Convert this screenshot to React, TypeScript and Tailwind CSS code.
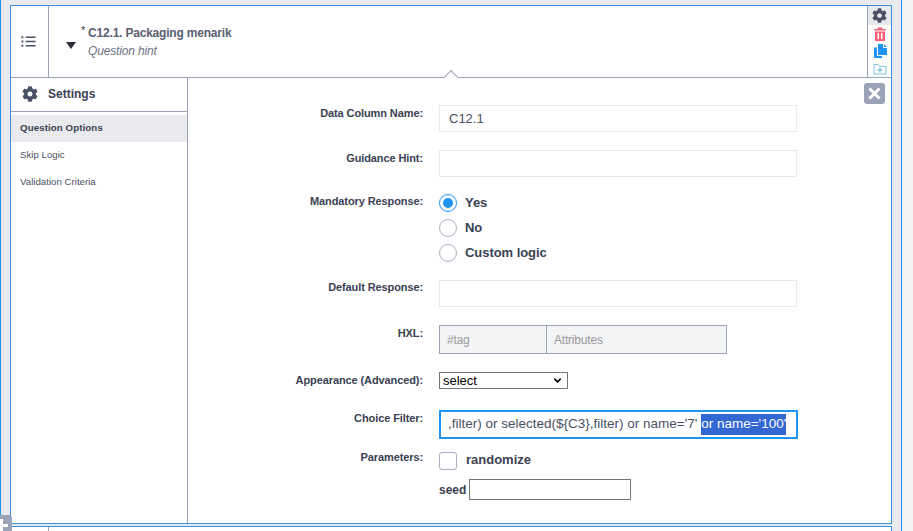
import { ChevronDown } from 'lucide-react'

function Gear({ className }: { className: string }) {
  return (
    <svg className={className} viewBox="0 0 512 512" fill="currentColor">
      <path d="M487.4 315.7l-42.6-24.6c4.3-23.2 4.3-47 0-70.2l42.6-24.6c4.9-2.8 7.1-8.6 5.5-14-11.1-35.6-30-67.8-54.7-94.6-3.8-4.1-10-5.1-14.8-2.3L380.8 110c-17.9-15.4-38.5-27.3-60.8-35.1V25.8c0-5.6-3.9-10.5-9.4-11.7-36.7-8.2-74.3-7.8-109.2 0-5.5 1.2-9.4 6.1-9.4 11.7V75c-22.2 7.9-42.8 19.8-60.8 35.1L88.7 85.5c-4.9-2.8-11-1.9-14.8 2.3-24.7 26.7-43.6 58.9-54.7 94.6-1.7 5.4.6 11.2 5.5 14L67.3 221c-4.3 23.2-4.3 47 0 70.2l-42.6 24.6c-4.9 2.8-7.1 8.6-5.5 14 11.1 35.6 30 67.8 54.7 94.6 3.8 4.1 10 5.1 14.8 2.3l42.6-24.6c17.9 15.4 38.5 27.3 60.8 35.1v49.2c0 5.6 3.9 10.5 9.4 11.7 36.7 8.2 74.3 7.8 109.2 0 5.5-1.2 9.4-6.1 9.4-11.7v-49.2c22.2-7.9 42.8-19.8 60.8-35.1l42.6 24.6c4.9 2.8 11 1.9 14.8-2.3 24.7-26.7 43.6-58.9 54.7-94.6 1.5-5.5-.7-11.3-5.6-14.1zM256 336c-44.1 0-80-35.9-80-80s35.9-80 80-80 80 35.9 80 80-35.9 80-80 80z" />
    </svg>
  )
}

function Label({ children, className = '' }: { children: string; className?: string }) {
  return (
    <div className={`w-[251px] shrink-0 pr-[16px] text-right text-[11px] leading-[14px] font-bold tracking-[-0.1px] text-[#3a4152] ${className}`}>
      {children}
    </div>
  )
}

function Radio({ label, checked = false }: { label: string; checked?: boolean }) {
  return (
    <div className="flex h-[25px] items-center gap-[8px]">
      <span className={`flex size-[18px] items-center justify-center rounded-full border ${checked ? 'border-[#2094f3]' : 'border-[#a9b0c2]'}`}>
        {checked && <span className="size-[10px] rounded-full bg-[#2094f3]" />}
      </span>
      <span className="text-[13px] font-bold tracking-[-0.05px] text-[#3a4152]">{label}</span>
    </div>
  )
}

export default function App() {
  return (
    <div className="relative h-[531px] w-[913px] overflow-hidden bg-[#f3f4f6] font-['Liberation_Sans',Arial,sans-serif]">
      <div className="h-full w-[902px] border-x border-x-[#2094f3] bg-[#e9eaee] pt-[5px] pr-[9px] pl-[9px]">
        <div className="relative h-[519px] w-[882px] border border-[#3b8fdc] bg-white">
          <div className="flex h-[72px] border-b border-[#9aa3b5]">
            <div className="flex w-[38px] shrink-0 items-center justify-center border-r border-[#9aa3b5] pr-[2px] text-[#4a5164]">
              <svg className="size-[15px]" viewBox="0 0 16 16" fill="none" stroke="currentColor">
                <path d="M5 3.500h10.500M5 8h10.500M5 12.500h10.500" strokeWidth="1.600" />
                <path d="M0.500 3.500h2M0.500 8h2M0.500 12.500h2" strokeWidth="2" />
              </svg>
            </div>
            <div className="flex flex-1 items-center pt-[1px] pl-[17px]">
              <span className="mt-[7px] h-0 w-0 border-x-[5px] border-t-[7px] border-x-transparent border-t-[#2b2f3a]" />
              <div className="ml-[4px]">
                <div className="flex text-[12px] leading-[16px] font-bold tracking-[-0.2px] text-[#596072]">
                  <span className="relative -top-[3px] mr-[3px] ml-[1px] text-[11px] font-normal text-[#3a4152]">*</span>
                  C12.1. Packaging menarik
                </div>
                <div className="mt-[2px] pl-[8px] text-[12px] leading-[16px] tracking-[-0.15px] text-[#6b7283] italic">Question hint</div>
              </div>
            </div>
            <div className="flex w-[24px] shrink-0 flex-col items-center border-l border-[#9aa3b5]">
              <div className="flex h-[19px] w-full items-center justify-center bg-[#e9eaee] text-[#4a5164]">
                <Gear className="size-[15px]" />
              </div>
              <svg className="mt-[2px] size-[14px] text-[#fb6176]" viewBox="0 0 14 14" fill="currentColor">
                <path d="M1 2h12v1.500H1zM4.500 0.500h5V2h-5zM2 4.500h10V14H2zM4.500 6v6h1.500V6zM8 6v6h1.500V6z" fillRule="evenodd" />
              </svg>
              <svg className="mt-[3px] size-[14px] text-[#2094f3]" viewBox="0 0 14 14" fill="currentColor">
                <path d="M5 0h5v4h4v7H5zM11 0.500l3 2.500h-3zM1 3.500h3V12h5v2H1z" />
              </svg>
              <svg className="mt-[4px] size-[14px] text-[#7cc3d8]" viewBox="0 0 14 14" fill="none" stroke="currentColor">
                <path d="M1 2.500h4l1.500 2h6.500v7.500H1z" />
                <path d="M4.500 8h5M7 5.500v5" strokeWidth="1.400" />
              </svg>
            </div>
          </div>
          {/* caret sitting on the header line */}
          <span className="absolute top-[66px] left-[435px] size-[10px] rotate-45 border-t border-l border-[#9aa3b5] bg-white" />
          <div className="flex h-[445px]">
            <div className="w-[177px] shrink-0 border-r border-[#9aa3b5]">
              <div className="flex h-[34px] items-center gap-[10px] border-b border-[#9aa3b5] pb-[2px] pl-[11px]">
                <Gear className="size-[16px] text-[#4a5164]" />
                <span className="text-[12px] font-bold text-[#3a4152]">Settings</span>
              </div>
              <div className="mt-[3px] flex h-[27px] items-center bg-[#e9eaee] pl-[9px] text-[9.700px] font-bold tracking-[0.1px] text-[#3a4152]">Question Options</div>
              <div className="flex h-[27px] items-center pl-[9px] text-[9.700px] text-[#4a5164]">Skip Logic</div>
              <div className="flex h-[27px] items-center pl-[9px] text-[9.700px] text-[#4a5164]">Validation Criteria</div>
            </div>
            <div className="relative flex-1 pt-[27px]">
              <button className="absolute top-[5px] right-[6px] flex size-[21px] items-center justify-center rounded-[3px] bg-[#9aa3b8]">
                <svg className="size-[13px]" viewBox="0 0 13 13" stroke="white" strokeWidth="3">
                  <path d="M1.500 1.500l10 10M11.500 1.500l-10 10" />
                </svg>
              </button>
              <div className="flex h-[45px]">
                <Label className="pt-[1px]">Data Column Name:</Label>
                <div className="flex h-[27px] w-[358px] items-center border border-[#e8e9ec] pl-[9px] text-[13px] text-[#4a5164]">C12.1</div>
              </div>
              <div className="flex h-[45px]">
                <Label className="pt-[1px]">Guidance Hint:</Label>
                <div className="h-[27px] w-[358px] border border-[#e8e9ec]" />
              </div>
              <div className="flex h-[85px]">
                <Label className="-mt-[1px]">Mandatory Response:</Label>
                <div className="-mt-[5px]">
                  <Radio label="Yes" checked />
                  <Radio label="No" />
                  <Radio label="Custom logic" />
                </div>
              </div>
              <div className="flex h-[46px]">
                <Label>Default Response:</Label>
                <div className="h-[27px] w-[358px] border border-[#e8e9ec]" />
              </div>
              <div className="flex h-[46px]">
                <Label>HXL:</Label>
                <div className="-mt-[1px] flex h-[29px] w-[288px] border border-[#9aa3b8] bg-[#f3f4f6] text-[12px] tracking-[-0.2px] text-[#9a9a9a]">
                  <div className="flex w-[107px] items-center border-r border-[#9aa3b8] pl-[7px]">#tag</div>
                  <div className="flex flex-1 items-center pl-[7px]">Attributes</div>
                </div>
              </div>
              <div className="flex h-[37px]">
                <Label className="pt-[1px]">Appearance (Advanced):</Label>
                <div className="flex h-[17px] w-[129px] items-center justify-between border border-[#767676] pr-[4px] pl-[3px] text-[13px] leading-none text-black">
                  select
                  <ChevronDown className="size-[11px]" strokeWidth={3.500} />
                </div>
              </div>
              <div className="flex h-[44px]">
                <Label className="pt-[2px]">Choice Filter:</Label>
                <div className="mt-[1px] flex h-[29px] w-[359px] items-center border-2 border-[#2094f3] pl-[7px] text-[13.500px] whitespace-pre text-[#4a5164]">
                  ,filter) or selected($&#123;C3&#125;,filter) or name='7' <span className="bg-[#3367d1] text-white">or name='100'</span>
                </div>
              </div>
              <div className="flex">
                <Label className="-mt-[3px]">Parameters:</Label>
                <div className="-mt-[1px]">
                  <div className="flex h-[18px] items-center gap-[9px]">
                    <span className="size-[18px] rounded-[3px] border border-[#a9b0c2]" />
                    <span className="-mt-[2px] text-[13px] font-bold text-[#3a4152]">randomize</span>
                  </div>
                  <div className="mt-[9px] flex items-center gap-[3px]">
                    <span className="text-[12px] font-bold text-[#3a4152]">seed</span>
                    <div className="h-[21px] w-[162px] border border-[#767676]" />
                  </div>
                </div>
              </div>
            </div>
          </div>
        </div>
        {/* next row peeking in at the bottom */}
        <div className="mt-[2px] h-[6px] w-[882px] border border-b-0 border-[#3b8fdc] bg-white pl-[37px]">
          <div className="h-full w-px bg-[#9aa3b5]" />
        </div>
      </div>
      {/* add button, mostly cut off by the window edge */}
      <div className="absolute top-[515px] -left-[9px] flex size-[21px] items-center justify-center rounded-[3px] bg-[#9aa3b8]">
        <svg className="size-[13px]" viewBox="0 0 13 13" stroke="white" strokeWidth="3">
          <path d="M6.500 0v13M0 6.500h13" />
        </svg>
      </div>
    </div>
  )
}
